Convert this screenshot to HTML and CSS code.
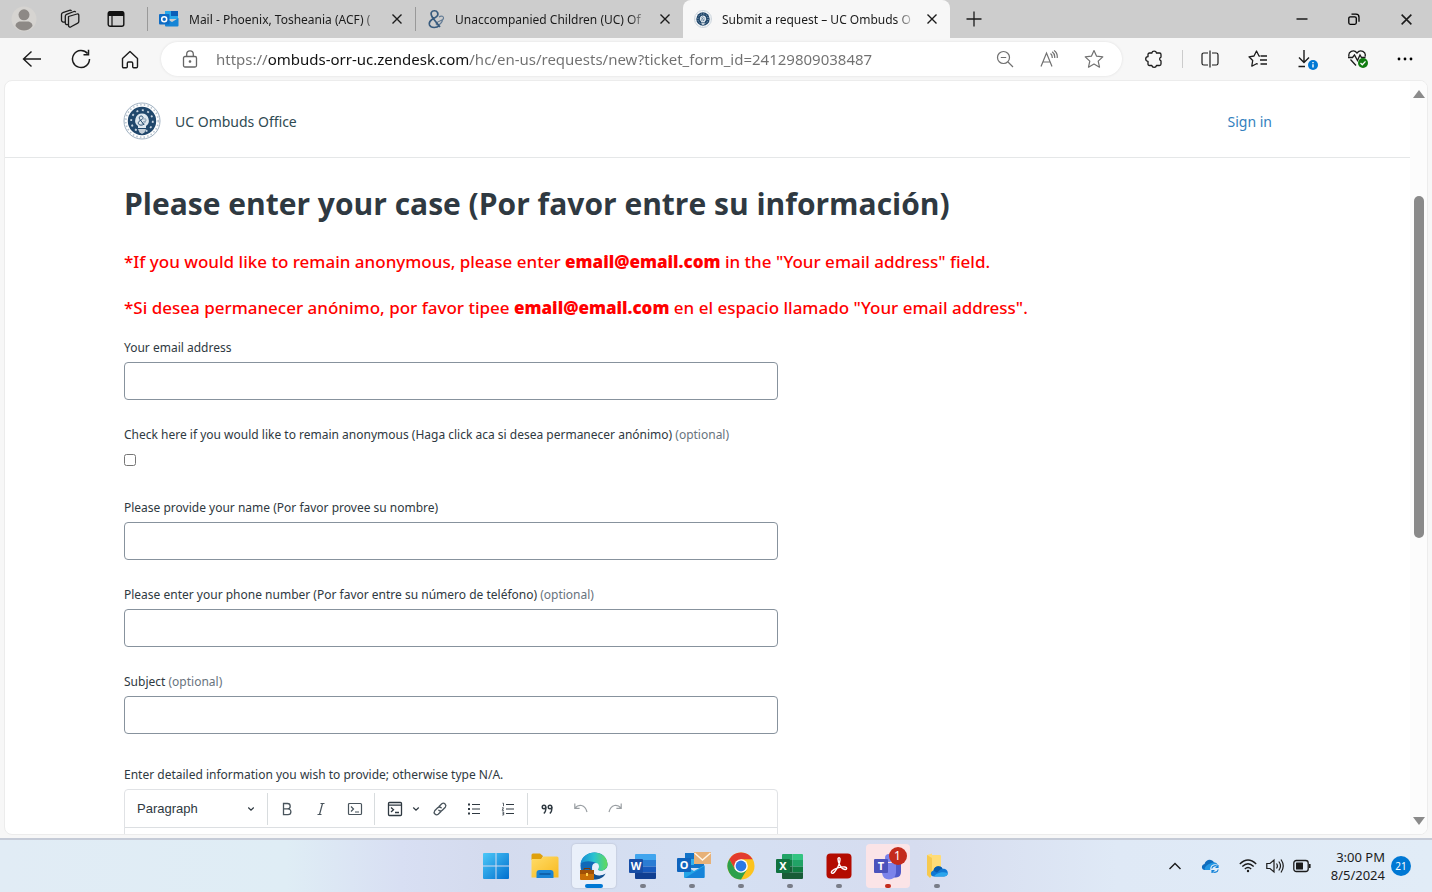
FILE: index.html
```html
<!DOCTYPE html>
<html lang="en">

<head>
    <meta charset="UTF-8">
    <meta name="viewport" content="width=device-width, initial-scale=1.0">
    <title>Submit a request – UC Ombuds Office</title>
    <link rel="stylesheet" href="styles.css">
</head>

<body>
    <!-- Shared symbols -->
    <svg class="symbols" aria-hidden="true">
        <symbol id="close" viewBox="0 0 12 12">
            <path d="M1.5 1.5l9 9M10.5 1.5l-9 9" fill="none" stroke="#1b1b1b" stroke-width="1.4" />
        </symbol>
        <symbol id="chevron" viewBox="0 0 8 8">
            <path d="M1.5 2.8L4 5.2l2.500-2.400" fill="none" stroke="#2f3941" stroke-width="1.200" stroke-linecap="round" />
        </symbol>
        <symbol id="ampersand" viewBox="0 0 18 20">
            <path d="M12.500 16.500C10 19 4 19.500 2.500 16c-1.300-3.500 2-5.500 5-7C10.500 7.500 11.500 5.500 10.500 3.500 9.500 1.300 5.500 1 4.300 3.500 3.300 6 5 8 7 10.500l6 7.500" fill="none" stroke="currentColor" stroke-width="1.700" />
            <path d="M12 8c2.500-2 5-.5 4.500 1.500-.5 2.300-5 2-7 4.500-1 1.300 1 3 3 1.500s2.500-2.500 3-4" fill="none" stroke="currentColor" stroke-width="1.200" opacity=".7" />
        </symbol>
        <symbol id="seal" viewBox="0 0 38 38">
            <circle cx="19" cy="19" r="18" fill="#fff" stroke="#9fb0c0" />
            <circle cx="19" cy="19" r="16.200" fill="none" stroke="#b9c5d0" stroke-width="1.600" stroke-dasharray="1.500 2.200" />
            <circle cx="19" cy="19" r="14.200" fill="#20476b" />
            <circle cx="19" cy="19" r="10.800" fill="none" stroke="#c6d3df" stroke-width="1.800" stroke-dasharray="2 3.600" />
            <path d="M19 11.500a7 7 0 0 1 4 12.600V26h-8v-1.900a7 7 0 0 1 4-12.600z" fill="#dfe8ef" />
            <path d="M15 27h8l-1.500 3.500L19 32l-2.500-1.500z" fill="#c3ced8" />
            <g color="#20476b"><use href="#ampersand" x="14" y="13" width="10" height="11" /></g>
        </symbol>
    </svg>

    <header class="tab-bar">
        <div class="tab-tools">
            <button aria-label="Profile">
                <svg width="26" height="26" viewBox="0 0 26 26">
                    <circle cx="13" cy="13" r="12.500" fill="#d6d4d1" />
                    <circle cx="13" cy="8.800" r="5.500" fill="#8d8986" />
                    <path d="M4.500 20c0-3 2.500-4.500 5-4.500h7c2.500 0 5 1.500 5 4.500-2 3-5.500 4.500-8.500 4.500S6.500 23 4.500 20z" fill="#8d8986" />
                </svg>
            </button>
            <button aria-label="Workspaces">
                <svg width="20" height="20" viewBox="0 0 20 20" fill="none" stroke="#1b1b1b" stroke-width="1.300" stroke-linejoin="round">
                    <path d="M8.500 7.500L17 5c1-.3 1.800.3 1.800 1.200v6.300c0 .8-.4 1.300-1 1.600L11 17.800c-1.300.6-2.500.2-2.500-1.300z" />
                    <path d="M8 15.500c-1.500.3-2.700-.2-2.700-1.500V7.200c0-1 .4-1.500 1.300-1.900L14 2.500c.7-.2 1.300.1 1.700.8" />
                    <path d="M5 13c-1.800.4-3.500-.3-3.500-1.800V5.500c0-.9.400-1.500 1.300-1.800L9.500 1.300c.9-.3 1.500 0 2 .7" />
                </svg>
            </button>
            <button aria-label="Tab actions">
                <svg width="18" height="18" viewBox="0 0 18 18">
                    <rect x="1.200" y="1.700" width="15.600" height="14.600" rx="2" fill="none" stroke="#111" stroke-width="1.400" />
                    <path d="M1 6V3.500Q1 1 3.500 1h11Q17 1 17 3.500V6z" fill="#111" />
                    <path d="M5 6v10" stroke="#111" stroke-width="1.200" />
                </svg>
            </button>
        </div>
        <div class="tabs">
            <div class="tab divided">
                <svg width="20" height="18" viewBox="0 0 20 18">
                    <path d="M6 1h13v8H6z" fill="#28a8ea" />
                    <path d="M12 1h7v5h-7z" fill="#0a5fb8" />
                    <path d="M6 8l7 4 6.500-4v7.500q0 1-1 1H7q-1 0-1-1z" fill="#1484d6" />
                    <rect x="0" y="4" width="10.500" height="10.500" rx="1" fill="#0f6cc4" />
                    <circle cx="5.200" cy="9.200" r="2.500" fill="none" stroke="#fff" stroke-width="1.500" />
                </svg>
                <span class="tab-title">Mail - Phoenix, Tosheania (ACF) (</span>
                <button aria-label="Close tab"><svg width="12" height="12"><use href="#close" /></svg></button>
            </div>
            <div class="tab divided">
                <svg class="amp-icon" width="18" height="20"><use href="#ampersand" /></svg>
                <span class="tab-title">Unaccompanied Children (UC) Of</span>
                <button aria-label="Close tab"><svg width="12" height="12"><use href="#close" /></svg></button>
            </div>
            <div class="tab active">
                <svg width="18" height="18"><use href="#seal" /></svg>
                <span class="tab-title">Submit a request – UC Ombuds O</span>
                <button aria-label="Close tab"><svg width="12" height="12"><use href="#close" /></svg></button>
            </div>
        </div>
        <button class="new-tab" aria-label="New tab">
            <svg width="16" height="16" viewBox="0 0 16 16"><path d="M8 .5v15M.5 8h15" stroke="#1b1b1b" stroke-width="1.300" /></svg>
        </button>
        <div class="window-controls">
            <button aria-label="Minimize"><svg width="12" height="12" viewBox="0 0 12 12"><path d="M.5 6h11" stroke="#000" stroke-width="1.300" /></svg></button>
            <button aria-label="Restore">
                <svg width="12" height="12" viewBox="0 0 12 12" fill="none" stroke="#000" stroke-width="1.300">
                    <rect x=".8" y="3.800" width="7.500" height="7.500" rx="1.500" />
                    <path d="M3.500 1.200H8q3 0 3 3v4.500" />
                </svg>
            </button>
            <button aria-label="Close"><svg width="13" height="13"><use href="#close" /></svg></button>
        </div>
    </header>

    <div class="toolbar">
        <div class="nav-buttons">
            <button aria-label="Back"><svg width="20" height="18" viewBox="0 0 20 18" fill="none" stroke="#1b1b1b" stroke-width="1.400"><path d="M9.500 1.500L1.500 9l8 7.500M1.500 9H19" /></svg></button>
            <button aria-label="Refresh"><svg width="20" height="20" viewBox="0 0 20 20" fill="none" stroke="#1b1b1b" stroke-width="1.500"><path d="M18.500 10A8.500 8.500 0 1 1 16.500 4.500M17.500.8v5h-5" /></svg></button>
            <button aria-label="Home"><svg width="18" height="19" viewBox="0 0 18 19" fill="none" stroke="#1b1b1b" stroke-width="1.400" stroke-linejoin="round"><path d="M1.500 8.500L9 1.500l7.500 7v8q0 1.300-1.200 1.300h-2.600q-1 0-1-1v-3.600q0-1.200-1.200-1.200h-3q-1.200 0-1.200 1.200v3.600q0 1-1 1H2.700q-1.200 0-1.200-1.300z" /></svg></button>
        </div>
        <div class="address-bar">
            <svg width="16" height="18" viewBox="0 0 16 18" fill="none" stroke="#666" stroke-width="1.300"><rect x="1.500" y="6.500" width="13" height="10.500" rx="1.500" /><path d="M4.700 6.500V4.200a3.300 3.300 0 0 1 6.600 0v2.300" /><circle cx="8" cy="11.500" r=".7" fill="#555" /></svg>
            <input class="url" type="text" aria-label="Address" value="https://ombuds-orr-uc.zendesk.com/hc/en-us/requests/new?ticket_form_id=24129809038487">
            <button aria-label="Zoom out"><svg width="18" height="18" viewBox="0 0 18 18" fill="none" stroke="#707070" stroke-width="1.200"><circle cx="7.500" cy="7.500" r="6" /><path d="M4.800 7.500h5.400M12 12l5 5" /></svg></button>
            <button aria-label="Read aloud"><svg width="18" height="18" viewBox="0 0 18 18" fill="none" stroke="#707070" stroke-width="1.200"><path d="M1 16.500L6.500 3 12 16.500M3 12h7M10.500 3.500q2 1.500 1.700 4.500M12.200 1.800q3 2.200 2.500 6.200M14 .5q3.800 2.500 3.200 7.500" /></svg></button>
            <button aria-label="Add to favorites"><svg width="20" height="20" viewBox="0 0 20 20" fill="none" stroke="#707070" stroke-width="1.200" stroke-linejoin="round"><path d="M10 1.500l2.600 5.700 6.200.7-4.600 4.200 1.300 6.100L10 15.100l-5.500 3.100 1.300-6.100L1.200 7.900l6.200-.7z" /></svg></button>
        </div>
        <div class="actions">
            <button aria-label="Extensions"><svg width="18" height="20" viewBox="0 0 18 20" fill="none" stroke="#1b1b1b" stroke-width="1.300" stroke-linejoin="round"><path d="M4.500 4h2.300a2.400 2.400 0 0 1 4.700 0h3q1.500 0 1.500 1.500v2.600a2 2 0 0 0 0 3.800v3.100q0 1.500-1.500 1.500h-3a2.400 2.400 0 0 1-4.700 0H4.500q-1.500 0-1.500-1.500v-2.700a2.300 2.300 0 0 1 0-4.600V5.500Q3 4 4.500 4z" /></svg></button>
            <span class="rule"></span>
            <button aria-label="Split screen"><svg width="18" height="18" viewBox="0 0 18 18" fill="none" stroke="#1b1b1b" stroke-width="1.200"><path d="M7 3H2.800Q1 3 1 4.800v8.400Q1 15 2.800 15H7M11 3h4.200Q17 3 17 4.800v8.400q0 1.800-1.800 1.800H11M9 .5v17" /></svg></button>
            <button aria-label="Favorites"><svg width="20" height="18" viewBox="0 0 20 18" fill="none" stroke="#1b1b1b" stroke-width="1.300" stroke-linejoin="round"><path d="M12 6.200L11 6 8.500 1 6 6l-5 .8 3.700 3.700-.9 5.700 4.700-2.500 1.200.5M12.500 6H19M12 10h7M12.500 14H19" /></svg></button>
            <button aria-label="Downloads"><svg width="22" height="22" viewBox="0 0 22 22" fill="none" stroke="#1b1b1b" stroke-width="1.400"><path d="M8 2v12M3 9.500L8 14.500l5-5M2.500 18.500H9" /><circle cx="17" cy="17" r="5" fill="#0078d4" stroke="none" /><path d="M17 16.300v3.200M17 14v1.300" stroke="#fff" /></svg></button>
            <button aria-label="Browser essentials"><svg width="22" height="20" viewBox="0 0 22 20" fill="none" stroke="#1b1b1b" stroke-width="1.300"><path d="M2 7.500C.8 3 6.500-.5 10 4c3.500-4.500 9.500-1 8 3.500M3.500 10.500l5.500 6M1 8.500h4.500L7.500 6l3 5.500L13 6l1.500 2.500h4" /><circle cx="16" cy="14" r="5" fill="#107c10" stroke="none" /><path d="M13.500 14l1.800 1.800 3.200-3.400" stroke="#fff" /></svg></button>
            <button aria-label="Settings and more"><svg width="16" height="4" viewBox="0 0 16 4"><circle cx="2" cy="2" r="1.400" /><circle cx="8" cy="2" r="1.400" /><circle cx="14" cy="2" r="1.400" /></svg></button>
        </div>
    </div>

    <div class="page">
        <div class="page-content">
            <header class="site-header">
                <a class="logo" href="#">
                    <svg width="38" height="38"><use href="#seal" /></svg>
                    <span>UC Ombuds Office</span>
                </a>
                <a class="sign-in" href="#">Sign in</a>
            </header>

            <main class="request">
                <h1>Please enter your case (Por favor entre su información)</h1>
                <p class="notice">*If you would like to remain anonymous, please enter <strong>email@email.com</strong> in the "Your email address" field.</p>
                <p class="notice">*Si desea permanecer anónimo, por favor tipee <strong>email@email.com</strong> en el espacio llamado "Your email address".</p>

                <form class="request-form">
                    <div class="field">
                        <label for="email">Your email address</label>
                        <input type="text" id="email">
                    </div>
                    <div class="field checkbox-field">
                        <label for="anonymous">Check here if you would like to remain anonymous (Haga click aca si desea permanecer anónimo) <span>(optional)</span></label>
                        <input type="checkbox" id="anonymous">
                    </div>
                    <div class="field">
                        <label for="name">Please provide your name (Por favor provee su nombre)</label>
                        <input type="text" id="name">
                    </div>
                    <div class="field">
                        <label for="phone">Please enter your phone number (Por favor entre su número de teléfono) <span>(optional)</span></label>
                        <input type="text" id="phone">
                    </div>
                    <div class="field">
                        <label for="subject">Subject <span>(optional)</span></label>
                        <input type="text" id="subject">
                    </div>
                    <div class="field description">
                        <label for="details">Enter detailed information you wish to provide; otherwise type N/A.</label>
                        <div class="editor">
                            <div class="editor-toolbar">
                                <div class="style-select">
                                    <select aria-label="Text style">
                                        <option>Paragraph</option>
                                    </select>
                                    <svg width="8" height="8"><use href="#chevron" /></svg>
                                </div>
                                <div class="tool-group">
                                    <button type="button" aria-label="Bold"><svg width="16" height="16" viewBox="0 0 16 16" fill="none" stroke="#49545c" stroke-width="1.300"><path d="M4.500 2.500h4a2.700 2.700 0 0 1 0 5.400h-4zM4.500 7.900H9a2.900 2.900 0 0 1 0 5.800H4.500z" /></svg></button>
                                    <button type="button" aria-label="Italic"><svg width="16" height="16" viewBox="0 0 16 16" fill="none" stroke="#49545c" stroke-width="1.200"><path d="M7.500 2.500h4M4.500 13.500h4M9.500 2.500l-3 11" /></svg></button>
                                    <button type="button" aria-label="Code span"><svg width="16" height="16" viewBox="0 0 16 16" fill="none" stroke="#49545c" stroke-width="1.200"><rect x="1.500" y="2.500" width="13" height="11" rx="1" /><path d="M4 5.500L6.500 8 4 10.500M8 11h4" /></svg></button>
                                </div>
                                <div class="tool-group">
                                    <button type="button" class="code-block" aria-label="Code block">
                                        <svg width="16" height="16" viewBox="0 0 16 16" fill="none" stroke="#2f3941" stroke-width="1.300"><rect x="1.500" y="1.500" width="13" height="13" rx="1" /><path d="M2 4.200h12M4 6.500l2.500 2.300L4 11M8 11.500h4" /></svg>
                                        <svg width="8" height="8"><use href="#chevron" /></svg>
                                    </button>
                                    <button type="button" aria-label="Link"><svg width="16" height="16" viewBox="0 0 16 16" fill="none" stroke="#49545c" stroke-width="1.300" stroke-linecap="round"><path d="M7 5.500l2.800-2.800a2.500 2.500 0 0 1 3.500 3.500l-3 3a2.500 2.500 0 0 1-3.500 0M9 10.500l-2.800 2.800a2.500 2.500 0 0 1-3.500-3.500l3-3a2.500 2.500 0 0 1 3.500 0" /></svg></button>
                                    <button type="button" aria-label="Bulleted list"><svg width="16" height="16" viewBox="0 0 16 16" stroke="#2f3941" stroke-width="1.200"><path d="M6 3.500h8M6 8h8M6 12.500h8" /><path d="M2 3.500h2M2 8h2M2 12.500h2" stroke-width="2" /></svg></button>
                                    <button type="button" aria-label="Numbered list"><svg width="16" height="16" viewBox="0 0 16 16" fill="none" stroke="#2f3941" stroke-width="1.200"><path d="M6 3.500h8M6 8h8M6 12.500h8" /><path d="M2.500 2.200h1v3M2 6.800h1.500L2.200 9.300H4M2.200 11h1.500v3H2.200M2.500 12.500h1" stroke-width=".8" /></svg></button>
                                </div>
                                <div class="tool-group">
                                    <button type="button" aria-label="Quote"><svg width="16" height="16" viewBox="0 0 16 16" fill="none" stroke="#2f3941" stroke-width="1.400"><circle cx="5" cy="6" r="1.800" /><circle cx="11" cy="6" r="1.800" /><path d="M6.800 6q.4 4.500-2 6.500M12.800 6q.4 4.500-2 6.500" /></svg></button>
                                    <button type="button" aria-label="Undo"><svg width="16" height="16" viewBox="0 0 16 16" fill="none" stroke="#9a9fa3" stroke-width="1.200"><path d="M1.800 2.500v4.800h4.800M2 7c3.500-4 10-4 12 4" /></svg></button>
                                    <button type="button" aria-label="Redo"><svg width="16" height="16" viewBox="0 0 16 16" fill="none" stroke="#9a9fa3" stroke-width="1.200"><path d="M14.200 2.500v4.800H9.400M14 7C10.500 3 4 3 2 11" /></svg></button>
                                </div>
                            </div>
                            <textarea id="details"></textarea>
                        </div>
                    </div>
                </form>
            </main>
        </div>
        <div class="scrollbar" aria-hidden="true">
            <span class="arrow-up"></span>
            <div class="track"><div class="thumb"></div></div>
            <span class="arrow-down"></span>
        </div>
    </div>

    <footer class="taskbar">
        <nav class="apps" aria-label="Taskbar">
            <button aria-label="Start">
                <svg width="28" height="28" viewBox="0 0 28 28">
                    <defs><linearGradient id="win" x1="0" y1="0" x2="1" y2="1"><stop offset="0" stop-color="#4cc8f8" /><stop offset="1" stop-color="#006fcf" /></linearGradient></defs>
                    <path d="M1 2q0-1 1-1h11.500v12.500H1zM14.500 1H26q1 0 1 1v11.500H14.500zM1 14.500h12.500V27H2q-1 0-1-1zM14.500 14.500H27V26q0 1-1 1H14.500z" fill="url(#win)" />
                </svg>
            </button>
            <button aria-label="File Explorer">
                <svg width="28" height="28" viewBox="0 0 28 28">
                    <defs><linearGradient id="folder" x1="0" y1="0" x2="1" y2="1"><stop offset="0" stop-color="#ffdc68" /><stop offset="1" stop-color="#f8b91e" /></linearGradient></defs>
                    <path d="M.5 8V3q0-1.500 1.500-1.500h7L12 4l-2 4z" fill="#dfa00b" />
                    <path d="M.5 7H10l2.500-2.500H26q1.500 0 1.500 1.500v19.500H.5z" fill="url(#folder)" />
                    <path d="M5.500 26v-5q0-3 3-3h11q3 0 3 3v5z" fill="#1a84d6" />
                    <path d="M9 22h10" stroke="#0b579f" stroke-width="1.500" stroke-linecap="round" />
                </svg>
            </button>
            <button class="open current" aria-label="Microsoft Edge">
                <svg width="28" height="28" viewBox="0 0 28 28">
                    <defs><linearGradient id="edge" x1="0" y1="0" x2="1" y2="0"><stop offset="0" stop-color="#168cd5" /><stop offset=".5" stop-color="#2ac3d0" /><stop offset="1" stop-color="#62db58" /></linearGradient></defs>
                    <path d="M.5 13C2-3 26-4 27.500 12c.3 5-4 7-8 6.500l-6-6L12 20c3 4 9 5 13.500 1.500C21 28 12 29 6 25 2 22 .3 18 .5 13z" fill="#1269b8" />
                    <path d="M.5 12C2-3.500 27-3.500 27.500 12c0 6-6 8-10 6 2-3 .5-7-4-8C8 8.500 2.500 9.500.5 12z" fill="url(#edge)" />
                    <path d="M12 15.500c0-5.500 7-6 7-1 0 2-1.200 2.500-1.200 3.500 1.200 2.500 5 2.500 8.200 1.500l-1 2.500c-6 2-13 0-13-6.500z" fill="#e9effa" />
                    <path d="M12 20c3 4 9 5 13.500 1.500-2 4.500-7 6.500-13.500 6z" fill="#12508f" />
                    <rect x="0" y="18" width="14" height="10" rx="1" fill="#c76e06" />
                    <path d="M0 18h14v4H0z" fill="#a05006" /><path d="M4 18v-1.500h6V18" fill="none" stroke="#7c3a04" />
                    <rect x="6" y="21" width="2" height="3" fill="#ffd04b" />
                </svg>
            </button>
            <button class="open" aria-label="Word">
                <svg width="28" height="28" viewBox="0 0 28 28">
                    <path d="M6 3q0-1 1-1h19q1 0 1 1v5H6z" fill="#41a5ee" /><path d="M6 8h21v6.500H6z" fill="#2b7cd3" /><path d="M6 14.500h21v6H6z" fill="#185abd" /><path d="M6 20.500h21V26q0 1-1 1H7q-1 0-1-1z" fill="#103f91" />
                    <rect x="0" y="7" width="14" height="14" rx="1" fill="#174ea6" /><text class="app-letter" x="7" y="18" text-anchor="middle">W</text>
                </svg>
            </button>
            <button class="open" aria-label="Outlook">
                <svg width="38" height="30" viewBox="-4 1 38 30">
                    <path d="M8 3h19v15H8z" fill="#1273c8" /><path d="M8 9h9v6H8z" fill="#31afee" /><path d="M7 15l10 6 10.500-6v12q0 1-1 1H8q-1 0-1-1z" fill="#25a5e7" /><path d="M8 28l19.500-12v11q0 1-1 1z" fill="#1684d9" />
                    <rect x="0" y="8" width="14" height="14" rx="1" fill="#0f64bd" /><text class="app-letter" x="7" y="19" text-anchor="middle">O</text>
                    <rect x="17" y="2" width="17" height="12" fill="#e7b178" /><path d="M17.500 3l8 7 8-7" fill="none" stroke="#fff6e9" stroke-width="1.400" />
                </svg>
            </button>
            <button class="open" aria-label="Google Chrome">
                <svg width="28" height="28" viewBox="0 0 28 28">
                    <circle cx="14" cy="14" r="13.500" fill="#fcc31e" />
                    <path d="M2.300 7.200A13.500 13.500 0 0 1 25.700 7.200H14L8.100 17.400z" fill="#e33b2e" />
                    <path d="M2.300 7.200A13.500 13.500 0 0 0 14 27.500L19.900 17.400H8.100z" fill="#2da04b" />
                    <circle cx="14" cy="14" r="6.800" fill="#fff" /><circle cx="14" cy="14" r="5.400" fill="#2b78e4" />
                </svg>
            </button>
            <button class="open" aria-label="Excel">
                <svg width="28" height="28" viewBox="0 0 28 28">
                    <path d="M6 3q0-1 1-1h9.500v6H6z" fill="#21a366" /><path d="M16.500 2H26q1 0 1 1v5H16.500z" fill="#33c481" /><path d="M6 8h10.500v6.500H6z" fill="#107c41" /><path d="M16.500 8H27v6.500H16.500z" fill="#21a366" /><path d="M6 14.500h10.500v6H6z" fill="#185c37" /><path d="M16.500 14.500H27v6H16.500z" fill="#107c41" /><path d="M6 20.500h21V26q0 1-1 1H7q-1 0-1-1z" fill="#185c37" />
                    <rect x="0" y="7" width="14" height="14" rx="1" fill="#107240" /><text class="app-letter" x="7" y="18" text-anchor="middle">X</text>
                </svg>
            </button>
            <button class="open" aria-label="Acrobat Reader">
                <svg width="26" height="26" viewBox="0 0 26 26">
                    <rect x=".5" y=".5" width="25" height="25" rx="4" fill="#b30b00" />
                    <path d="M12 6c0-2 2.500-2 2 1-.4 4-3 9-5.500 12-2 2.500-4.300 1-2.500-1 2.500-2.700 8.500-4.500 13-4 2.500.3 2 2.700 0 2.500C15 16 12 10 12 6z" fill="none" stroke="#fff" stroke-width="1.400" />
                </svg>
            </button>
            <button class="open alert" aria-label="Teams, 1 notification">
                <svg width="28" height="28" viewBox="0 0 28 28">
                    <circle cx="22" cy="8" r="3" fill="#5059c9" /><path d="M18 11h9v9q0 5-5 5.500h-4z" fill="#5059c9" />
                    <circle cx="15" cy="6" r="4" fill="#7b83eb" /><path d="M8 11h14v10q-1 6.500-7 6.500T8 21z" fill="#7b83eb" />
                    <rect x="0" y="7" width="14" height="14" rx="1" fill="#4b53bc" /><text class="app-letter" x="7" y="18" text-anchor="middle">T</text>
                </svg>
                <span class="count">1</span>
            </button>
            <button class="open" aria-label="OneDrive folder">
                <svg width="24" height="26" viewBox="0 0 24 26">
                    <path d="M2 2l5-1.500V2h8q1 0 1 1v20H5l-3-1z" fill="#ffdc77" /><path d="M2 2l5 3v17l-2 3-3-3z" fill="#f7c94f" />
                    <path d="M9 23.500c-4 0-4-5.500-.5-6 1-5 7-5.500 9-1.800 3.500-.2 5.500 2 5.300 4.500-.2 2.300-2 3.300-4 3.300z" fill="#0f78d4" /><path d="M8.500 17.500c1-5 7-5.500 9-1.800-3 0-3 3-6 3.800z" fill="#0a5cad" />
                    <path d="M9 23.500c2-3.500 9-5.500 13.800-3.300-.2 2.300-2 3.300-4 3.300z" fill="#2ba5ec" />
                </svg>
            </button>
        </nav>
        <div class="tray">
            <button aria-label="Show hidden icons"><svg width="14" height="10" viewBox="0 0 14 10"><path d="M1.500 8L7 2.500 12.500 8" fill="none" stroke="#1b1b1b" stroke-width="1.400" /></svg></button>
            <button class="drive" aria-label="OneDrive">
                <svg width="20" height="16" viewBox="0 0 20 16">
                    <path d="M4 12C0 12 0 6.500 3.500 6 4.500 1 11 0 13 4.500c2.500 0 4 2 4 4.500v3z" fill="#0f6cbd" /><path d="M4 12C2 9 8 5 13 4.500 16 5 17 7 17 9v3z" fill="#2196e3" />
                    <circle cx="14" cy="11" r="4.800" fill="#e2ecf7" /><path d="M10.800 10.500a3.300 3.300 0 0 1 6-1.300M17.200 11.500a3.300 3.300 0 0 1-6 1.300M17 7v2.500h-2.500M11 15v-2.500h2.500" fill="none" stroke="#1683d8" stroke-width="1.200" />
                </svg>
            </button>
            <button class="status" aria-label="Network, volume and battery">
                <svg width="18" height="14" viewBox="0 0 18 14" fill="none" stroke="#1b1b1b" stroke-width="1.300"><path d="M.8 5q8.200-8 16.400 0M3.300 7.500q5.700-5.500 11.400 0M5.800 10q3.200-3 6.400 0" /><circle cx="9" cy="12" r="1.200" fill="#1b1b1b" stroke="none" /></svg>
                <svg width="18" height="16" viewBox="0 0 18 16" fill="none" stroke="#1b1b1b" stroke-width="1.200"><path d="M.8 5.500H4L8 2v12l-4-3.500H.8zM10.500 5.500q1.800 2.500 0 5M12.800 3.500q3.400 4.500 0 9M15 1.500q4.500 6.500 0 13" /></svg>
                <svg width="18" height="14" viewBox="0 0 18 14" fill="none" stroke="#1b1b1b" stroke-width="1.300"><rect x=".8" y="1.500" width="14.400" height="11" rx="2.500" /><rect x="3" y="3.500" width="7" height="7" rx=".5" fill="#1b1b1b" stroke="none" /><path d="M16.800 5v4" stroke-width="1.600" /></svg>
            </button>
            <div class="clock">
                <time>3:00 PM</time>
                <time>8/5/2024</time>
            </div>
            <span class="notifications">21</span>
        </div>
    </footer>
</body>

</html>
```
FILE: styles.css
```css
:root {
    --text-color: #2f3941;
    --muted-color: #68737d;
    --link-color: #337fbd;
    --border-color: #87929d;
    --chrome-color: #f7f7f7;
}

* {
    box-sizing: border-box;
}

body {
    display: flex;
    flex-direction: column;
    height: 100vh;
    margin: 0;
    overflow: hidden;
    background-color: var(--chrome-color);
    color: var(--text-color);
    font-family: "Noto Sans", "Open Sans", sans-serif;
    font-size: 12px;
}

button,
select,
textarea,
input {
    font-family: inherit;
    font-size: inherit;
}

button {
    display: flex;
    align-items: center;
    justify-content: center;
    padding: 0;
    border: 0;
    background: none;
}

svg {
    flex-shrink: 0;
}

.symbols {
    display: none;
}

/* Tab strip */
.tab-bar {
    display: flex;
    height: 38px;
    background-color: #cdcdcd;
    color: #1b1b1b;
}

.tab-tools {
    display: flex;
    width: 147px;
    padding-left: 1px;
}

.tab-tools button {
    width: 46px;
}

.tabs {
    display: flex;
    flex: 0 1 803px;
    min-width: 0;
}

.tab {
    display: flex;
    flex: 1;
    align-items: center;
    gap: 10px;
    min-width: 0;
    padding: 0 12px 0 11px;
}

.tab.divided {
    border-left: 1px solid #999;
    border-image: linear-gradient(transparent 20%, #999 20%, #999 80%, transparent 80%) 1;
}

.tab.active {
    border-radius: 8px 8px 0 0;
    background-color: var(--chrome-color);
}

.tab-title {
    flex: 1;
    overflow: hidden;
    white-space: nowrap;
    -webkit-mask-image: linear-gradient(to right, #000 90%, transparent);
    mask-image: linear-gradient(to right, #000 90%, transparent);
}

.amp-icon {
    color: #375a7d;
}

.new-tab {
    width: 48px;
}

.window-controls {
    display: flex;
    margin-left: auto;
}

.window-controls button {
    width: 52px;
}

/* Address row */
.toolbar {
    display: flex;
    align-items: center;
    height: 42px;
}

.nav-buttons {
    display: flex;
    width: 161px;
    padding-left: 7px;
}

.nav-buttons button {
    width: 49px;
}

.address-bar {
    display: flex;
    flex: 1;
    align-items: center;
    gap: 26px;
    height: 34px;
    padding: 0 18px 0 21px;
    border-radius: 17px;
    background-color: #fff;
    box-shadow: 0 0 3px rgba(0, 0, 0, 0.1);
}

.url {
    flex: 1;
    min-width: 0;
    margin-left: -8px;
    padding: 0;
    border: 0;
    outline: 0;
    /* darkens the host part of the address */
    background: linear-gradient(to right, #707070 52px, #111 52px, #111 254px, #707070 254px);
    -webkit-background-clip: text;
    background-clip: text;
    color: transparent;
    font-size: 15px;
}

.actions {
    display: flex;
    align-items: center;
    justify-content: space-between;
    width: 310px;
    padding: 0 19px 0 23px;
}

.rule {
    width: 1px;
    height: 18px;
    margin: 0 -10px;
    background-color: #ccc;
}

/* Web page */
.page {
    display: flex;
    flex: 1;
    min-height: 0;
    margin: 0 4px 3px;
    overflow: hidden;
    border: 1px solid #ececec;
    border-radius: 8px;
    background-color: #fff;
}

.page-content {
    flex: 1;
    min-width: 0;
    overflow: hidden;
}

.site-header {
    display: flex;
    align-items: center;
    justify-content: space-between;
    height: 77px;
    padding: 4px 138px 0 118px;
    border-bottom: 1px solid #e5e7e8;
    font-size: 14px;
}

.logo {
    display: flex;
    align-items: center;
    gap: 14px;
    color: #2f4a52;
    text-decoration: none;
}

.sign-in {
    color: var(--link-color);
    text-decoration: none;
}

.request {
    padding: 23px 138px 0 119px;
}

h1 {
    margin: 0;
    font-family: "Open Sans", "Noto Sans", sans-serif;
    font-size: 30px;
    font-weight: 700;
    line-height: 46px;
}

.notice {
    margin: 24px 0 0;
    color: #f00;
    font-size: 17px;
    font-weight: 500;
    line-height: 22px;
}

.notice strong {
    font-weight: 900;
}

.request-form {
    max-width: 654px;
    margin-top: 19px;
}

.field {
    display: flex;
    flex-direction: column;
    margin-bottom: 25px;
}

.field label {
    margin-bottom: 4px;
    line-height: 20px;
    white-space: nowrap;
}

.field label span {
    color: var(--muted-color);
}

.field input[type="text"] {
    height: 38px;
    padding: 0 10px;
    border: 1px solid var(--border-color);
    border-radius: 4px;
}

.checkbox-field {
    margin-bottom: 32px;
}

.checkbox-field input {
    width: 12px;
    height: 12px;
    margin: 5px 0 0;
}

.description {
    margin-top: 31px;
}

.editor {
    border: 1px solid #e0e2e5;
    border-radius: 4px;
}

.editor-toolbar {
    display: flex;
    align-items: center;
    height: 38px;
    border-bottom: 1px solid #dcdfe2;
}

.style-select {
    display: flex;
    align-items: center;
    width: 142px;
    padding: 0 12px;
}

.style-select select {
    flex: 1;
    padding: 0;
    border: 0;
    appearance: none;
    background: none;
    color: inherit;
    font-family: "Liberation Sans", Arial, sans-serif;
    font-size: 13px;
}

.tool-group {
    display: flex;
    align-items: center;
    height: 32px;
    padding: 0 2px;
    border-left: 1px solid #d8dcde;
}

.tool-group button {
    width: 34px;
    height: 32px;
}

.tool-group .code-block {
    gap: 9px;
    width: 46px;
    padding-left: 6px;
}

#details {
    display: block;
    width: 100%;
    height: 120px;
    border: 0;
    resize: none;
}

.scrollbar {
    display: flex;
    flex-direction: column;
    align-items: center;
    justify-content: space-between;
    width: 17px;
    padding: 9px 0;
    background-color: #fcfcfc;
}

.arrow-up,
.arrow-down {
    border: 6px solid transparent;
}

.arrow-up {
    border-top: 0;
    border-bottom: 8px solid #8a8a8a;
}

.arrow-down {
    border-top: 8px solid #8a8a8a;
    border-bottom: 0;
}

.track {
    flex: 1;
    width: 10px;
    padding-top: 98px;
}

.thumb {
    height: 55%;
    border-radius: 5px;
    background-color: #8a8a8a;
}

/* Windows taskbar */
.taskbar {
    display: grid;
    grid-template-columns: 1fr auto 1fr;
    align-items: center;
    height: 54px;
    border-top: 2px solid #c5cbd7;
    background: linear-gradient(to right, #e1ecf5 0%, #dfedf5 20%, #d8dff3 28%, #d4dbee 34%, #d5e0f3 50%, #d6dcef 64%, #dfe9f6 78%, #e1ecf7 100%);
    color: #1b1b1b;
}

.apps {
    display: grid;
    grid-column: 2;
    grid-template-columns: repeat(10, 44px);
    gap: 5px;
}

.apps button {
    position: relative;
    height: 44px;
    border-radius: 4px;
}

.apps .current {
    background-color: #eaf0fa;
    box-shadow: 0 0 2px rgba(0, 0, 0, 0.2);
}

.apps .alert {
    background-color: #fbe4e7;
}

.apps .open::after {
    position: absolute;
    bottom: 0;
    left: 50%;
    width: 6px;
    height: 4px;
    border-radius: 2px;
    background-color: #797d88;
    content: "";
    transform: translateX(-50%);
}

.apps .current::after {
    width: 18px;
    background-color: #0078d4;
}

.apps .alert::after {
    background-color: #c42b1c;
}

.app-letter {
    fill: #fff;
    font-size: 11px;
    font-weight: 700;
}

.count {
    position: absolute;
    top: 3px;
    right: 3px;
    width: 18px;
    height: 18px;
    border-radius: 9px;
    background-color: #c42b1c;
    color: #fff;
    font-size: 12px;
    line-height: 18px;
}

.tray {
    display: flex;
    align-items: center;
    justify-self: end;
    padding-right: 21px;
}

.drive {
    margin: 0 18px 0 19px;
}

.status {
    gap: 9px;
}

.clock {
    display: flex;
    flex-direction: column;
    width: 74px;
    font-size: 13px;
    line-height: 18px;
    text-align: right;
}

.notifications {
    width: 20px;
    height: 20px;
    margin-left: 6px;
    border-radius: 10px;
    background-color: #0078d4;
    color: #fff;
    font-size: 10px;
    line-height: 20px;
    text-align: center;
}
```
